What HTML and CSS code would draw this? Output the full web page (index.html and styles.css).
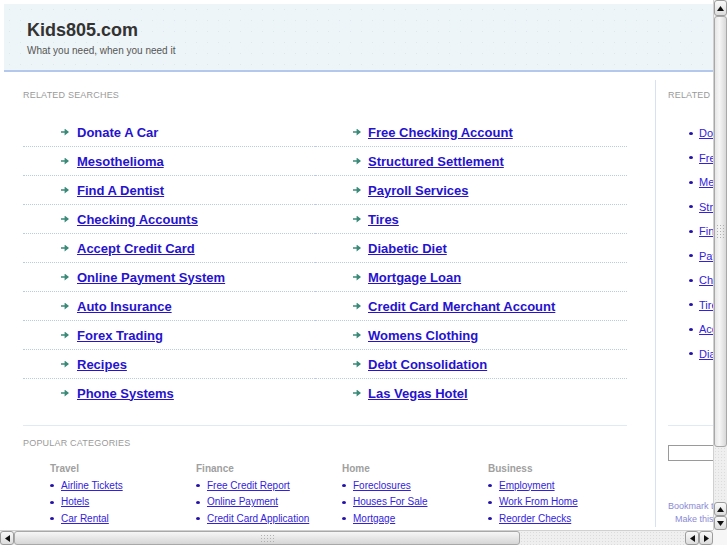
FILE: index.html
```html
<!DOCTYPE html>
<html>
<head>
    <meta charset="UTF-8">
    <title>Kids805.com</title>
    <link rel="stylesheet" href="styles.css">
</head>
<body>
    <div class="window">
        <div class="viewport">
            <div class="page">
                <div class="header">
                    <h1>Kids805.com</h1>
                    <p class="tagline">What you need, when you need it</p>
                </div>

                <div class="main">
                    <div class="content">
                        <div class="label">Related Searches</div>

                        <div class="searches">
                            <div class="cell"><span class="arrow"></span><a href="#" class="plain">Donate A Car</a></div>
                            <div class="cell"><span class="arrow"></span><a href="#">Free Checking Account</a></div>
                            <div class="cell"><span class="arrow"></span><a href="#">Mesothelioma</a></div>
                            <div class="cell"><span class="arrow"></span><a href="#">Structured Settlement</a></div>
                            <div class="cell"><span class="arrow"></span><a href="#">Find A Dentist</a></div>
                            <div class="cell"><span class="arrow"></span><a href="#">Payroll Services</a></div>
                            <div class="cell"><span class="arrow"></span><a href="#">Checking Accounts</a></div>
                            <div class="cell"><span class="arrow"></span><a href="#">Tires</a></div>
                            <div class="cell"><span class="arrow"></span><a href="#">Accept Credit Card</a></div>
                            <div class="cell"><span class="arrow"></span><a href="#">Diabetic Diet</a></div>
                            <div class="cell"><span class="arrow"></span><a href="#">Online Payment System</a></div>
                            <div class="cell"><span class="arrow"></span><a href="#">Mortgage Loan</a></div>
                            <div class="cell"><span class="arrow"></span><a href="#">Auto Insurance</a></div>
                            <div class="cell"><span class="arrow"></span><a href="#">Credit Card Merchant Account</a></div>
                            <div class="cell"><span class="arrow"></span><a href="#">Forex Trading</a></div>
                            <div class="cell"><span class="arrow"></span><a href="#">Womens Clothing</a></div>
                            <div class="cell"><span class="arrow"></span><a href="#">Recipes</a></div>
                            <div class="cell"><span class="arrow"></span><a href="#">Debt Consolidation</a></div>
                            <div class="cell last"><span class="arrow"></span><a href="#">Phone Systems</a></div>
                            <div class="cell last"><span class="arrow"></span><a href="#">Las Vegas Hotel</a></div>
                        </div>

                        <div class="rule"></div>
                        <div class="label popular">Popular Categories</div>

                        <div class="categories">
                            <div class="category">
                                <h3>Travel</h3>
                                <ul>
                                    <li><a href="#">Airline Tickets</a></li>
                                    <li><a href="#">Hotels</a></li>
                                    <li><a href="#">Car Rental</a></li>
                                </ul>
                            </div>
                            <div class="category">
                                <h3>Finance</h3>
                                <ul>
                                    <li><a href="#">Free Credit Report</a></li>
                                    <li><a href="#">Online Payment</a></li>
                                    <li><a href="#">Credit Card Application</a></li>
                                </ul>
                            </div>
                            <div class="category">
                                <h3>Home</h3>
                                <ul>
                                    <li><a href="#">Foreclosures</a></li>
                                    <li><a href="#">Houses For Sale</a></li>
                                    <li><a href="#">Mortgage</a></li>
                                </ul>
                            </div>
                            <div class="category">
                                <h3>Business</h3>
                                <ul>
                                    <li><a href="#">Employment</a></li>
                                    <li><a href="#">Work From Home</a></li>
                                    <li><a href="#">Reorder Checks</a></li>
                                </ul>
                            </div>
                        </div>
                    </div>

                    <div class="sidebar">
                        <div class="label">Related Searches</div>
                        <ul class="side-links">
                            <li><a href="#">Donate A Car</a></li>
                            <li><a href="#">Free Checking Account</a></li>
                            <li><a href="#">Mesothelioma</a></li>
                            <li><a href="#">Structured Settlement</a></li>
                            <li><a href="#">Find A Dentist</a></li>
                            <li><a href="#">Payroll Services</a></li>
                            <li><a href="#">Checking Accounts</a></li>
                            <li><a href="#">Tires</a></li>
                            <li><a href="#">Accept Credit Card</a></li>
                            <li><a href="#">Diabetic Diet</a></li>
                        </ul>
                        <div class="side-rule"></div>
                        <input type="text" class="search-box">
                        <div class="bookmark">Bookmark this page</div>
                        <div class="homepage">Make this your Homepage</div>
                    </div>
                </div>
            </div>
        </div>

        <div class="vscroll">
            <div class="sb-btn"><svg width="7" height="5" viewBox="0 0 7 5"><path d="M0 5L3.5 0L7 5z" fill="#111"/></svg></div>
            <div class="v-thumb"><span class="grip"></span></div>
            <div class="v-track"></div>
            <div class="sb-btn small"><svg width="7" height="5" viewBox="0 0 7 5"><path d="M0 5L3.5 0L7 5z" fill="#111"/></svg></div>
            <div class="sb-btn small"><svg width="7" height="5" viewBox="0 0 7 5"><path d="M0 0L3.5 5L7 0z" fill="#111"/></svg></div>
        </div>

        <div class="hscroll">
            <div class="sb-btn"><svg width="5" height="7" viewBox="0 0 5 7"><path d="M5 0L0 3.5L5 7z" fill="#111"/></svg></div>
            <div class="h-thumb"><span class="grip"></span></div>
            <div class="h-track"></div>
            <div class="sb-btn"><svg width="5" height="7" viewBox="0 0 5 7"><path d="M5 0L0 3.5L5 7z" fill="#111"/></svg></div>
            <div class="sb-btn"><svg width="5" height="7" viewBox="0 0 5 7"><path d="M0 0L5 3.5L0 7z" fill="#111"/></svg></div>
        </div>

        <div class="corner"></div>
    </div>
</body>
</html>
```

FILE: styles.css
```css
body {
    margin: 0;
    font-family: "Liberation Sans", Arial, sans-serif;
    background-color: #fff;
    overflow: hidden;
}
.window {
    display: grid;
    grid-template-columns: 713px 14px;
    grid-template-rows: 530px 15px;
    width: 727px;
    height: 545px;
}
.viewport {
    overflow: hidden;
    background-color: #fff;
}
.page {
    width: 900px;
    padding: 4px 0 0 4px;
}
.header {
    height: 68px;
    box-sizing: border-box;
    padding: 15px 0 0 23px;
    background-color: #eef5f8;
    background-image: radial-gradient(circle, #dde8ee 0.6px, transparent 0.9px);
    background-size: 11px 11px;
    border-bottom: 2px solid #b3c8ec;
}
h1 {
    margin: 0;
    font-size: 18px;
    line-height: 22px;
    color: #333;
}
.tagline {
    margin: 3px 0 0;
    font-size: 10px;
    line-height: 13px;
    color: #555;
}
.main {
    display: flex;
    margin-top: 8px;
}
.content {
    width: 604px;
    flex-shrink: 0;
    padding: 10px 28px 0 19px;
}
.label {
    font-size: 9px;
    line-height: 11px;
    letter-spacing: 0.2px;
    text-transform: uppercase;
    color: #9a9a9a;
    white-space: nowrap;
}
.searches {
    display: grid;
    grid-template-columns: 292px 312px;
    margin-top: 17px;
}
.cell {
    display: flex;
    align-items: center;
    height: 28px;
    padding-left: 38px;
    border-bottom: 1px dotted #b7cce6;
}
.cell.last {
    border-bottom: none;
}
.arrow {
    width: 8px;
    height: 7px;
    margin-right: 8px;
    background-color: #3a8a7a;
    clip-path: polygon(0 38%, 45% 38%, 45% 0, 100% 50%, 45% 100%, 45% 62%, 0 62%);
}
.cell:nth-child(even) .arrow {
    margin-right: 7px;
}
.cell a {
    font-size: 13px;
    font-weight: bold;
    color: #2612cf;
}
.cell a.plain {
    text-decoration: none;
}
.rule {
    margin-top: 18px;
    border-top: 1px solid #e0eaf4;
}
.popular {
    margin-top: 12px;
}
.categories {
    display: grid;
    grid-template-columns: repeat(4, 146px);
    padding-left: 27px;
    margin-top: 12px;
}
.category h3 {
    margin: 0;
    font-size: 10px;
    line-height: 16.5px;
    color: #a0a0a0;
}
.category ul, .side-links {
    list-style: none;
    margin: 0;
    padding: 0;
}
.category li {
    display: flex;
    align-items: center;
    font-size: 10px;
    line-height: 16.5px;
}
.category li::before, .side-links li::before {
    content: "";
    width: 4px;
    height: 3px;
    margin-right: 7px;
    border-radius: 50%;
    background-color: #2211aa;
}
.category a {
    color: #3322dd;
}
.sidebar {
    width: 220px;
    flex-shrink: 0;
    padding: 10px 0 0 12px;
    border-left: 1px solid #d6e1f2;
}
.side-links {
    display: flex;
    flex-direction: column;
    gap: 10.5px;
    margin-top: 25px;
    padding-left: 21px;
}
.side-links li {
    display: flex;
    align-items: center;
    font-size: 11px;
    line-height: 14px;
    white-space: nowrap;
}
.side-links li::before {
    flex-shrink: 0;
    margin-right: 6px;
}
.side-links a {
    color: #3322dd;
}
.side-rule {
    margin-top: 64px;
    border-top: 1px solid #e0eaf4;
}
.search-box {
    display: block;
    width: 150px;
    height: 16px;
    box-sizing: border-box;
    margin-top: 19px;
    border: 1px solid #9a9a9a;
}
.bookmark {
    margin-top: 39px;
    font-size: 9px;
    line-height: 12px;
    color: #8a8ad6;
    white-space: nowrap;
}
.homepage {
    padding-left: 7px;
    font-size: 9px;
    line-height: 14px;
    color: #8a8ad6;
    white-space: nowrap;
}

/* fake scrollbars */
.vscroll {
    display: flex;
    flex-direction: column;
    background-color: #efefef;
    border-left: 1px solid #d0d0d0;
}
.hscroll {
    display: flex;
    background-color: #efefef;
    border-top: 1px solid #d0d0d0;
}
.corner {
    background-color: #f6f6f6;
}
.sb-btn {
    display: flex;
    align-items: center;
    justify-content: center;
    box-sizing: border-box;
    border: 1px solid #9c9c9c;
    border-radius: 3px;
    background: linear-gradient(#fafafa, #dcdcdc);
}
.vscroll .sb-btn {
    height: 16px;
}
.vscroll .sb-btn.small {
    height: 14px;
}
.hscroll .sb-btn {
    width: 14px;
}
.v-thumb, .h-thumb {
    display: flex;
    align-items: center;
    justify-content: center;
    box-sizing: border-box;
    border: 1px solid #a8a8a8;
    border-radius: 3px;
}
.v-thumb {
    height: 431px;
    background: linear-gradient(to right, #e6e6e6, #f6f6f6 40%, #d8d8d8);
}
.h-thumb {
    width: 506px;
    background: linear-gradient(#f6f6f6, #e6e6e6 50%, #d6d6d6);
}
.grip {
    background-image: radial-gradient(circle, #b0b0b0 0.7px, transparent 1px);
    background-size: 3px 3px;
}
.v-thumb .grip {
    width: 9px;
    height: 15px;
}
.h-thumb .grip {
    width: 15px;
    height: 9px;
}
.v-track, .h-track {
    flex: 1;
    background-image: radial-gradient(circle, #dcdcdc 0.6px, transparent 0.9px);
    background-size: 3px 3px;
}
```
